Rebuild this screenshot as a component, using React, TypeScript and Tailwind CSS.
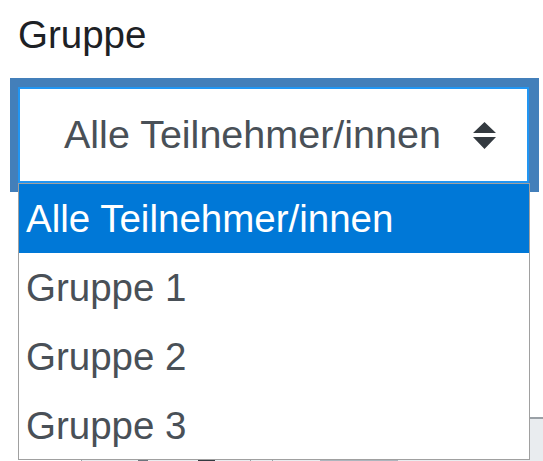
const options = ["Alle Teilnehmer/innen", "Gruppe 1", "Gruppe 2", "Gruppe 3"];

const SortArrows = () => (
  <svg width="23" height="27" viewBox="0 0 23 27" className="shrink-0">
    <path d="M11.5 0L23 11H0Z M11.5 27L0 15H23Z" fill="#343a40" />
  </svg>
);

const App = () => {
  const selected = 0;

  return (
    <div className="relative w-[543px] h-[461px] overflow-hidden bg-white font-['Liberation_Sans',Arial,sans-serif]">
      {/* label */}
      <div className="h-[78px] pt-[16px] pl-[18px] text-[38.5px] leading-none text-[#1d2125]">
        Gruppe
      </div>

      {/* focused select */}
      <div className="ml-[10px] w-[529px] h-[114px] bg-[#437fba] pt-[9px] pb-[9px] pl-[8px] pr-[10px]">
        <div className="h-full bg-white border-2 border-[#2196f3] flex items-center justify-between pl-[44px] pr-[31px]">
          <span className="text-[39.5px] leading-none text-[#495057] whitespace-nowrap">
            {options[selected]}
          </span>
          <SortArrows />
        </div>
      </div>

      {/* page content behind the popup */}
      <div className="mt-[225px] ml-[81px] h-[60px] bg-[#e9ecef] border-t-2 border-l border-[#9aa0a6]">
        <div className="flex items-start pt-[40px]">
          <div className="ml-[56px] w-[10px] h-[4px] bg-[#6c757d]" />
          <div className="ml-[50px] w-[17px] h-[4px] bg-[#343a40]" />
          <div className="ml-[35px] w-[1px] h-[4px] bg-[#9aa0a6]" />
          <div className="ml-[21px] w-[1px] h-[4px] bg-[#9aa0a6]" />
          <div className="ml-[47px] w-[78px] h-[4px] bg-[#adb5bd]" />
        </div>
      </div>

      {/* open option list */}
      <div className="absolute left-[18px] top-[183px] w-[512px] h-[277px] bg-white border border-[#a0a0a0]">
        {options.map((opt, i) => (
          <div
            key={opt}
            className={`h-[69px] pl-[7px] text-[38.5px] leading-[69px] whitespace-nowrap ${
              i === selected ? "bg-[#0078d7] text-white" : "text-[#495057]"
            }`}
          >
            {opt}
          </div>
        ))}
      </div>
    </div>
  );
};

export default App;
